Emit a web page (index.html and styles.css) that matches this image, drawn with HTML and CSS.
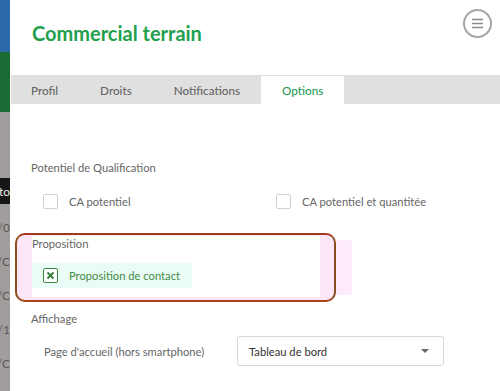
FILE: index.html
```html
<!DOCTYPE html>
<html lang="fr">
<head>
<meta charset="utf-8">
<title>Commercial terrain</title>
<link rel="stylesheet" href="styles.css">
</head>
<body>
<div class="app">
  <aside class="strip">
    <div class="strip-blue"></div>
    <div class="strip-green"></div>
    <div class="strip-gray">
      <div class="strip-black"><span>Dato</span></div>
      <div class="strip-item"><span>01/0</span></div>
      <div class="strip-item"><span>01/C</span></div>
      <div class="strip-item"><span>01/C</span></div>
      <div class="strip-item"><span>01/1</span></div>
      <div class="strip-item"><span>01/C</span></div>
    </div>
  </aside>
  <main class="panel">
    <header class="header">
      <h1 class="title">Commercial terrain</h1>
      <button class="menu-btn" aria-label="Menu">
        <svg width="13" height="11" viewBox="0 0 13 11"><path d="M1 1.5h11M1 5.5h11M1 9.5h11" stroke="#8a8a8a" stroke-width="1.6" fill="none"/></svg>
      </button>
    </header>
    <nav class="tabs">
      <span class="tab">Profil</span>
      <span class="tab">Droits</span>
      <span class="tab">Notifications</span>
      <span class="tab active">Options</span>
    </nav>
    <section class="content">
      <div class="section-title">Potentiel de Qualification</div>
      <div class="check-row">
        <label class="check-item first"><span class="box"></span><span>CA potentiel</span></label>
        <label class="check-item"><span class="box"></span><span>CA potentiel et quantitée</span></label>
      </div>
      <div class="highlight">
        <div class="inner">
          <div class="section-title">Proposition</div>
          <div class="checked-row">
            <span class="box checked">
              <svg width="9" height="9" viewBox="0 0 9 9"><path d="M1.5 1.5l6 6M7.5 1.5l-6 6" stroke="#2e7d32" stroke-width="1.8" fill="none"/></svg>
            </span>
            <span class="checked-label">Proposition de contact</span>
          </div>
        </div>
      </div>
      <div class="section-title affichage">Affichage</div>
      <div class="field-row">
        <span class="field-label">Page d'accueil (hors smartphone)</span>
        <div class="select">
          <span>Tableau de bord</span>
          <span class="caret"></span>
        </div>
      </div>
    </section>
  </main>
</div>
</body>
</html>
```

FILE: styles.css
```css
* { box-sizing: border-box; }
html, body { margin: 0; padding: 0; background: #fff; }
body {
  font-family: Lato, "Liberation Sans", Arial, sans-serif;
  width: 500px;
  height: 391px;
  overflow: hidden;
}
.app { display: flex; height: 391px; }

.strip { width: 10px; flex: none; display: flex; flex-direction: column; overflow: hidden; }
.strip-blue { height: 52px; background: #2a6aa8; }
.strip-green { height: 60px; background: #1b6a34; }
.strip-gray { flex: 1; background: #a19d9d; padding-top: 66px; }
.strip-black { height: 26px; background: #171717; color: #eee; }
.strip-item { height: 34px; color: #5b5757; }
.strip-black, .strip-item {
  display: flex; justify-content: flex-end; align-items: center;
  font-size: 12px; white-space: nowrap; overflow: hidden;
}
.strip-item { align-items: flex-start; padding-top: 16px; }

.panel { flex: 1; min-width: 0; }
.header { height: 75px; display: flex; justify-content: space-between; align-items: flex-start; }
.title {
  margin: 20px 0 0 22px;
  font-size: 20px; line-height: 26px; font-weight: 700;
  color: #22a04c;
}
.menu-btn {
  margin: 9px 8px 0 0; width: 29px; height: 29px; border-radius: 50%;
  border: 2px solid #a6a6a6; background: #fff; padding: 0;
  display: flex; align-items: center; justify-content: center;
}
.tabs { display: flex; height: 29px; background: #e0e0e0; margin-left: 1px; }
.tab {
  padding: 0 21px; display: flex; align-items: center;
  font-size: 11.7px; color: #666; font-weight: 500;
}
.tab:first-child { padding-left: 20px; }
.tab.active { background: #fff; color: #2b9b57; margin-top: 1px; }

.content { padding-left: 21px; color: #666; font-size: 11.2px; }
.section-title { line-height: 16px; color: #666; }
.content > .section-title:first-child { margin-top: 56px; }
.check-row { display: flex; margin-top: 18px; }
.check-item { display: flex; align-items: center; gap: 11px; padding-left: 12px; color: #666; }
.check-item.first { width: 233px; }
.box {
  width: 15px; height: 15px; border: 1.5px solid #d0d0d0; border-radius: 2px;
  background: #fff; flex: none; display: flex; align-items: center; justify-content: center;
}
.box.checked { border-color: #3d8a45; }

.highlight {
  margin: 24px 0 0 -16px; width: 321px; height: 69px;
  border: 2px solid #8a4e1c; border-top-color: #a13c1a; border-bottom-color: #a5421a;
  border-radius: 10px; background: #fde6f8;
  padding: 1px 14px 3px 15px;
  box-shadow: 23px 0 0 -7px #fdebfa;
}
.inner { background: #fff; height: 100%; }
.checked-row {
  display: flex; align-items: center; gap: 11px; white-space: nowrap;
  width: 160px; height: 25px; margin-top: 11px; padding-left: 11px;
  background: #ebfbf6;
}
.checked-label { color: #3f8c45; }
.affichage { margin-top: 9px; }
.field-row { display: flex; align-items: center; margin-top: 9px; padding-left: 13px; }
.field-label { width: 193px; color: #666; }
.select {
  width: 207px; height: 30px; border: 1px solid #d8d8d8; border-radius: 3px;
  display: flex; align-items: center; justify-content: space-between;
  padding: 0 14px 0 11px; color: #333;
}
.caret {
  width: 0; height: 0; border-left: 4px solid transparent; border-right: 4px solid transparent;
  border-top: 4px solid #666;
}
```
